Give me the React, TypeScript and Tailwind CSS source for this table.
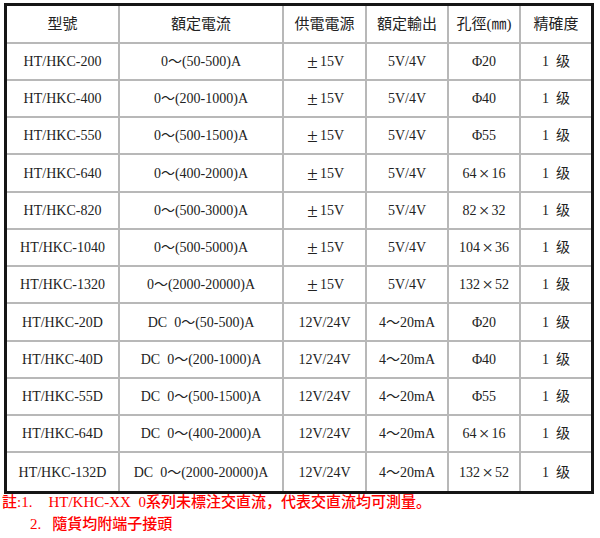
import React from 'react';

const headers = ['型號', '額定電流', '供電電源', '額定輸出', '孔徑(㎜)', '精確度'];

const rows = [
  ['HT/HKC-200', '0～(50-500)A', '±15V', '5V/4V', 'Φ20'],
  ['HT/HKC-400', '0～(200-1000)A', '±15V', '5V/4V', 'Φ40'],
  ['HT/HKC-550', '0～(500-1500)A', '±15V', '5V/4V', 'Φ55'],
  ['HT/HKC-640', '0～(400-2000)A', '±15V', '5V/4V', '64×16'],
  ['HT/HKC-820', '0～(500-3000)A', '±15V', '5V/4V', '82×32'],
  ['HT/HKC-1040', '0～(500-5000)A', '±15V', '5V/4V', '104×36'],
  ['HT/HKC-1320', '0～(2000-20000)A', '±15V', '5V/4V', '132×52'],
  ['HT/HKC-20D', 'DC\u00a0\u00a00～(50-500)A', '12V/24V', '4～20mA', 'Φ20'],
  ['HT/HKC-40D', 'DC\u00a0\u00a00～(200-1000)A', '12V/24V', '4～20mA', 'Φ40'],
  ['HT/HKC-55D', 'DC\u00a0\u00a00～(500-1500)A', '12V/24V', '4～20mA', 'Φ55'],
  ['HT/HKC-64D', 'DC\u00a0\u00a00～(400-2000)A', '12V/24V', '4～20mA', '64×16'],
  ['HT/HKC-132D', 'DC\u00a0\u00a00～(2000-20000)A', '12V/24V', '4～20mA', '132×52'],
];

// row heights add up to 447px between the header line and the bottom border
const rowHeights = ['h-[37px]', 'h-[37px]', 'h-[37px]', 'h-[38px]'];

// ± and × are full-width in the original font, give them room
function CellText({ text }: { text: string }) {
  const parts = text.split(/([±×])/);
  return (
    <>
      {parts.map((p, i) =>
        p === '±' || p === '×' ? (
          <span key={i} className="inline-block w-[15px] text-center text-[19px] leading-none">
            {p}
          </span>
        ) : (
          <span key={i}>{p}</span>
        )
      )}
    </>
  );
}

export default function App() {
  return (
    <div className="w-[600px] h-[538px] bg-white pt-[3px] pl-[4px] overflow-hidden">
      <div
        className="w-[590px] border-[3px] border-[#151515] text-[#222]"
        style={{ fontFamily: '"Liberation Serif", "Noto Sans CJK TC", serif' }}
      >
        <div className="grid grid-cols-[113px_164px_83px_82px_72px_70px]">
          {headers.map((h, i) => (
            <div
              key={h}
              className={`h-[38px] flex items-center justify-center text-[15px] border-b-2 border-[#b8b8b8] ${
                i < 5 ? 'border-r-2' : ''
              }`}
            >
              {h}
            </div>
          ))}

          {rows.map((row, r) =>
            [...row, '1\u00a0\u00a0级'].map((cell, c) => (
              <div
                key={`${r}-${c}`}
                className={`${rowHeights[r % 4]} flex items-center justify-center text-[14px] border-[#b8b8b8] ${
                  c < 5 ? 'border-r-2' : ''
                } ${r < rows.length - 1 ? 'border-b-2' : ''}`}
              >
                <CellText text={cell} />
              </div>
            ))
          )}
        </div>
      </div>

      <div
        className="-ml-[2px] text-[15px] text-[#ff0000] font-medium"
        style={{ fontFamily: '"Liberation Serif", "Noto Sans CJK JP", sans-serif' }}
      >
        <div className="leading-[17px] whitespace-nowrap">
          註:1.
          <span className="ml-[16px]">HT/KHC-XX&nbsp;&nbsp;0系列未標注交直流，代表交直流均可測量。</span>
        </div>
        <div className="leading-[26px] whitespace-nowrap pl-[28px]">
          2.
          <span className="ml-[11px]">隨貨均附端子接頭</span>
        </div>
      </div>
    </div>
  );
}
